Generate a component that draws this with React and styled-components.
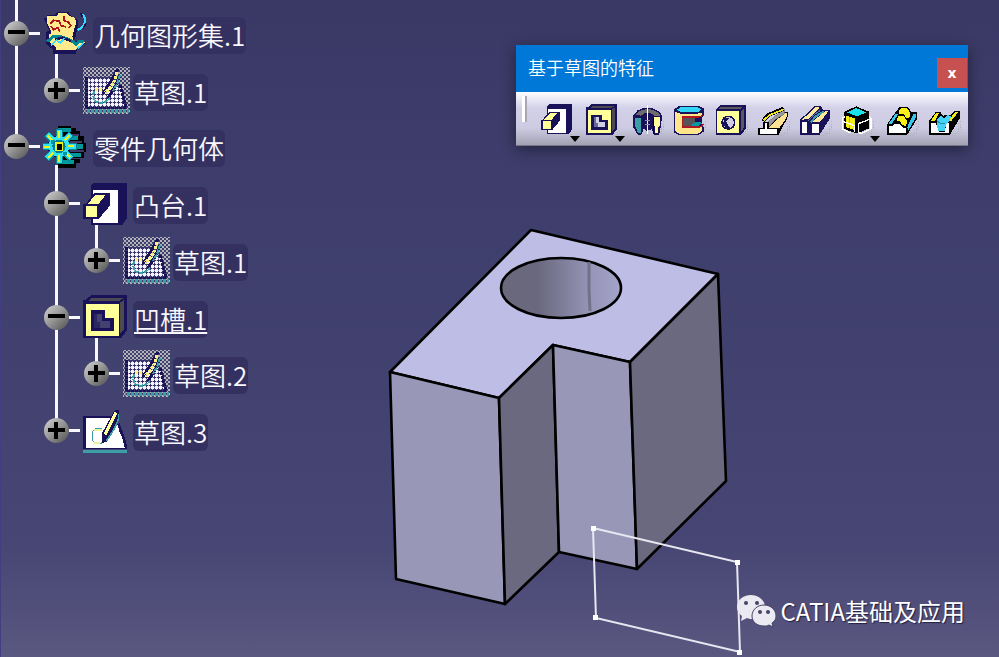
import styled, { createGlobalStyle } from 'styled-components'

const colors = {
    ink: '#1a1258',
    yellow: '#ffff99',
    teal: '#3c9ea6',
    cyan: '#33ddff',
    line: '#f8f7fd',
    label: '#343160',
    title: '#0078d7',
    close: '#c75050'
}

const GlobalStyle = createGlobalStyle`
    * {
        box-sizing: border-box;
    }
    body {
        margin: 0;
        font-family: "Noto Sans CJK SC", "Noto Sans", sans-serif;
    }
    button {
        padding: 0;
        border: none;
        background: none;
        font-family: inherit;
        cursor: pointer;
    }
    svg {
        display: block;
    }
`

const Viewport = styled.main`
    position: relative;
    min-height: 100vh;
    overflow: hidden;
    background: linear-gradient(#3a3966 0%, #40406f 45%, #464573 82%, #5a5780 100%);
    box-shadow: inset 1px 0 0 #413f80;
`

const Scene = styled.svg`
    position: absolute;
    inset: 0;
    width: 100%;
    height: 100%;
`

/* specification tree */

const Tree = styled.nav`
    position: relative;
    width: max-content;
    padding-left: 3px;
`

const Stem = styled.div`
    width: 40px;
    height: 5px;
    background: linear-gradient(${colors.line}, ${colors.line}) 12px 0 / 3px 100% no-repeat;
`

const Rows = styled.ul`
    display: grid;
    grid-template-rows: repeat(8, 1fr);
    height: 454px;
    margin: 0;
    padding: 0;
    list-style: none;
`

const Row = styled.li`
    display: flex;
    align-items: stretch;
`

const Guide = styled.span`
    width: 40px;
`

const GuideLine = styled(Guide)`
    background: linear-gradient(${colors.line}, ${colors.line}) 12px 0 / 3px 100% no-repeat;
`

const Branch = styled.span`
    display: flex;
    align-items: center;
    width: 40px;
    padding-left: 1px;
    background: linear-gradient(${colors.line}, ${colors.line}) 12px 0 / 3px ${props => props.$last ? '50%' : '100%'} no-repeat;

    &::after {
        content: '';
        flex: 1;
        height: 3px;
        margin-right: 3px;
        background: ${colors.line};
    }
`

const Ball = styled.button`
    display: grid;
    place-items: center;
    width: 25px;
    height: 25px;
    border-radius: 50%;
    background: linear-gradient(135deg, #c8c8c8 10%, #9a9a9a 45%, #5c5c5c 90%);
`

const IconCell = styled.span`
    display: flex;
    flex-direction: column;
    justify-content: center;
    width: 50px;
    background: linear-gradient(${colors.line}, ${colors.line}) 12px 100% / 3px ${props => props.$open ? '10px' : '0'} no-repeat;
`

const Label = styled.span`
    align-self: center;
    margin-top: 4px;
    padding: 0 1px 2px;
    border-radius: 6px;
    background: ${colors.label};
    color: ${colors.line};
    font-size: 26px;
    font-weight: 350;
    line-height: 35px;
    text-decoration: ${props => props.$active ? 'underline' : 'none'};
    text-decoration-thickness: 2px;
    text-underline-offset: 2px;
`

/* floating toolbar */

const ToolWindow = styled.section`
    position: absolute;
    top: 45px;
    right: 31px;
    width: 452px;
    box-shadow: 0 3px 14px rgba(0, 0, 0, 0.45);
`

const TitleBar = styled.header`
    display: flex;
    align-items: center;
    justify-content: space-between;
    height: 47px;
    padding: 0 1px 0 12px;
    background: ${colors.title};
`

const Title = styled.h1`
    margin: 0;
    padding-bottom: 3px;
    color: white;
    font-size: 18px;
    font-weight: 350;
    line-height: 24px;
`

const CloseButton = styled.button`
    align-self: flex-end;
    width: 30px;
    height: 30px;
    margin-bottom: 4px;
    background: ${colors.close};
    color: white;
    font-family: "DejaVu Sans", sans-serif;
    font-size: 14px;
    font-weight: bold;
    line-height: 26px;
`

const ToolBar = styled.div`
    display: flex;
    align-items: flex-start;
    gap: 6px;
    height: 54px;
    padding: 4px 0 0 6px;
    border-bottom: 1px solid #777688;
    background: linear-gradient(#fdfdff 0, #d2d1e8 16px, #cccbe2 36px, #a3a2b3 100%);
`

const Grip = styled.span`
    width: 5px;
    height: 26px;
    margin-right: 8px;
    border-left: 3px solid white;
    border-right: 2px solid #a8a7b8;
`

const Tool = styled.button`
    position: relative;
    display: flex;
    flex: none;
    align-items: flex-start;
    width: ${props => props.$menu ? '39px' : '36px'};
    height: 46px;
    padding-top: 8px;
`

const MenuArrow = styled.span`
    position: absolute;
    right: 0;
    bottom: 0;
    border: 5px solid transparent;
    border-top: 6px solid black;
    border-bottom: none;
`

const Watermark = styled.footer`
    position: absolute;
    right: 34px;
    bottom: 28px;
    display: flex;
    align-items: center;
    gap: 5px;
    color: white;
    font-size: 24px;
    line-height: 36px;
    text-shadow: 1px 1px 1px rgba(20, 18, 50, 0.8);
`

/* icons */

function PadIcon({ size }) {
    return (
        <svg width={size} height={size} viewBox="0 0 132 132" shapeRendering="crispEdges">
            <path d="M24 12L34 2H132V108L118 129H24Z" fill={colors.ink} />
            <path d="M29 23H106V123H29Z" fill="white" />
            <path d="M0 66H8L34 34H80V72L48 110H0Z" fill={colors.ink} />
            <path d="M9 71H43V105H9Z" fill={colors.yellow} />
            <path d="M13 66L37 40H67L46 66Z" fill={colors.yellow} />
        </svg>
    )
}

function PocketIcon({ size, hollow }) {
    return (
        <svg width={size} height={size} viewBox="0 0 132 132" shapeRendering="crispEdges">
            <path d="M1 14H8L24 1H132V106L114 130H1Z" fill={colors.ink} />
            <path d="M16 18L27 9H122L108 18ZM124 15V102L112 116V22Z" fill="#4b4a50" />
            <path d="M9 26H107V124H9Z" fill={colors.yellow} />
            <path d="M23 45H66V68H92V109H23Z" fill={colors.ink} />
            <path d="M32 56H56V78H82V99H32Z" fill={hollow} />
            <path d="M32 56H41V82H32ZM32 82H50V99H32Z" fill={colors.ink} opacity="0.55" />
        </svg>
    )
}

function GeometricSetIcon() {
    return (
        <svg width="44" height="44" viewBox="0 0 132 132" shapeRendering="crispEdges" fill="none">
            <path d="M2 22H12V12H36L46 2H76L82 12L104 28V48L98 76L92 92L122 88L128 98L104 110L98 128H30V116L10 100V62L18 58L8 34Z" fill={colors.ink} />
            <path d="M12 16H42L46 6H72L78 14L94 20L100 32L92 60L88 78L96 96L104 90H122L126 96L108 106L98 118H38V108L20 94L18 70L26 66L12 34Z" fill="#ffea8c" />
            <path d="M12 92L32 76L58 78L84 88L100 100L108 92L124 90" stroke="#008a94" strokeWidth="9" />
            <path d="M36 86L58 80L84 90" stroke={colors.ink} strokeWidth="7" />
            <path d="M24 104L40 88L52 96L64 82M104 112L124 94" stroke={colors.cyan} strokeWidth="5" />
            <path d="M22 38L32 28L48 30L54 44L70 48M22 44L32 56L44 50L50 62M62 16V28L76 34L84 44L76 52" stroke="#b3121c" strokeWidth="5" />
            <path d="M118 8L126 22V36L118 48L104 58" stroke={colors.cyan} strokeWidth="6" />
            <path d="M112 6L118 18M130 36L120 52" stroke={colors.ink} strokeWidth="5" />
        </svg>
    )
}

function BodyIcon() {
    const teeth = [0, 45, 90, 135, 180, 225, 270, 315]

    return (
        <svg width="44" height="44" viewBox="0 0 132 132" shapeRendering="crispEdges" fill="none">
            <path d="M46 2H84V10H100V18H112V34H122V54H130V82H122V100H112V114H100V128H44V118H60V14H46Z" fill="black" />
            <path d="M70 28H108V34H70ZM80 48H118V54H80ZM80 76H122V81H80ZM74 98H110V103H74Z" fill="#3e3d6c" />
            <path d="M44 8H84V20H44ZM60 32H104V46H60ZM70 57H120V72H70ZM68 83H114V95H68ZM56 106H94V118H56Z" fill="#009a9e" />
            <circle cx="48" cy="64" r="34" fill={colors.ink} />
            {teeth.map(angle => (
                <path key={angle} d="M39 12H57V42H39Z" fill="#2fe3f2" stroke="#00858f" strokeWidth="3" transform={`rotate(${angle} 48 64)`} />
            ))}
            <circle cx="48" cy="64" r="31" fill="#2fe3f2" />
            {teeth.map(angle => (
                <path key={angle} d="M44 18H50V38H44Z" fill="#eef222" transform={`rotate(${angle} 48 64)`} />
            ))}
            <path d="M24 46H36V58H24ZM60 80H72V90H60Z" fill="#00989c" />
            <circle cx="48" cy="64" r="20" fill="#007f94" />
            <path d="M38 54H58V76H38Z" fill="black" stroke="#e8ee20" strokeWidth="5" />
        </svg>
    )
}

function SketchIcon() {
    return (
        <svg width="44" height="44" viewBox="0 0 132 132" shapeRendering="crispEdges" fill="none">
            <path d="M0 22H92L132 119H0Z" fill={colors.ink} />
            <path d="M10 28H84L104 46L110 70L118 88L126 118H10Z" fill="white" />
            <path d="M106 44L114 66L122 88L130 118" stroke={colors.ink} strokeWidth="8" />
            <path d="M0 127H132" stroke={colors.teal} strokeWidth="8" />
            <path d="M57 58H38L28 68V94L38 104H54L60 98" stroke={colors.teal} strokeWidth="4" />
            <path d="M34 64H56M34 102H50" stroke="#e9f29a" strokeWidth="6" />
            <path d="M96 2H107V24L72 98L56 102V74Z" fill={colors.ink} />
            <path d="M99 10L66 76" stroke={colors.yellow} strokeWidth="10" />
            <path d="M106 14V32L96 54L84 76L70 96" stroke={colors.teal} strokeWidth="5" />
        </svg>
    )
}

// sketches consumed by a feature are shown through a screen of dots
function HiddenSketchIcon() {
    return (
        <svg width="47" height="47" viewBox="0 0 47 47" shapeRendering="crispEdges" fill="none">
            <defs>
                <pattern id="screen" width="4" height="4" patternUnits="userSpaceOnUse">
                    <path d="M1 0h2v1h-2zM0 1h1v2h-1zM3 1h1v2h-1zM1 3h2v1h-2z" fill="#b4b3b8" />
                </pattern>
                <pattern id="paper" width="4" height="4" patternUnits="userSpaceOnUse">
                    <path d="M0 0h3v3h-3z" fill="#f6f5fb" />
                    <path d="M3 1h1v1h-1zM1 3h1v1h-1z" fill="#b9b8d4" />
                </pattern>
                <pattern id="edge" width="4" height="4" patternUnits="userSpaceOnUse">
                    <path d="M0 0h3v4h-3z" fill={colors.teal} />
                </pattern>
            </defs>
            <path d="M0 0H47V47H0Z" fill="url(#screen)" />
            <path d="M2 10H32L38 18L44 42H2Z" fill="#38346a" />
            <path d="M5 11H30L38 20L41 40H5Z" fill="url(#paper)" />
            <path d="M3 10V41H44M37 18L43 40" stroke={colors.ink} strokeWidth="3" strokeDasharray="3 1" />
            <path d="M35 2L28 14L20 27M37 8L33 18L25 31" stroke={colors.ink} strokeWidth="3" />
            <path d="M34 5L32 13L27 21L22 26M12 22H20" stroke="#fdf27d" strokeWidth="3" strokeDasharray="3 1" />
            <path d="M37 8L34 17L30 24M11 24L10 29L12 34L17 36L22 35L27 31" stroke={colors.teal} strokeWidth="2" strokeDasharray="4 1" />
            <path d="M2 42H46V46H2Z" fill="url(#edge)" />
        </svg>
    )
}

function ToolSvg({ children }) {
    return (
        <svg width="36" height="33" viewBox="0 3 108 99" shapeRendering="crispEdges" fill="none">
            <path d="M14 98H84M66 92H92M92 60V92M98 54V84" stroke="#b2b1c2" strokeWidth="4" strokeDasharray="4 4" />
            {children}
        </svg>
    )
}

function ShaftIcon() {
    return (
        <ToolSvg>
            <path d="M5 38L20 22L38 15H64L86 26L93 38L90 70L84 95H68L62 78L49 84L38 78L31 95H20L5 70Z" fill={colors.ink} />
            <path d="M12 36L30 22L44 19H60L82 28L88 38H70L58 30H42L30 38Z" fill="#6c6b6e" />
            <path d="M12 44H29V91H22L12 70Z" fill={colors.teal} />
            <path d="M70 42H88V66L82 72V91H71Z" fill={colors.yellow} />
            <path d="M66 46V92H70V46Z" fill="black" />
            <path d="M49 7V92" stroke="white" strokeWidth="4" />
            <path d="M42 52H56M42 64H56" stroke="#8f8ea8" strokeWidth="3" />
        </ToolSvg>
    )
}

function GrooveIcon() {
    return (
        <ToolSvg>
            <path d="M3 18L20 8H76L92 16V34L88 44V66L92 72V86L76 96H18L3 88Z" fill={colors.ink} />
            <path d="M7 26L22 32H74L88 28V34L84 40H30V72H88V84L74 92H20L7 85Z" fill="#ffe68c" />
            <path d="M9 20L24 10H74L88 20L74 30H24Z" fill="#33d6f5" stroke={colors.ink} strokeWidth="4" />
            <path d="M30 44H66V70H30Z" fill="#55545a" />
            <path d="M50 70L68 56H86V62L72 72Z" fill="#009aa4" />
            <path d="M66 56L86 50V60" stroke={colors.ink} strokeWidth="4" />
            <path d="M92 36L78 42H28V72H80L92 64" stroke="#b01820" strokeWidth="4" />
        </ToolSvg>
    )
}

function HoleIcon() {
    return (
        <ToolSvg>
            <path d="M2 20L16 7H93V76L78 96H2Z" fill={colors.ink} />
            <path d="M10 18L20 11H86L76 18ZM88 16V73L79 85V24Z" fill="#5a595e" />
            <path d="M7 23H73V91H7Z" fill={colors.yellow} />
            <circle cx="40" cy="59" r="19" fill="#cfcee2" stroke={colors.ink} strokeWidth="5" />
            <path d="M28 44H44L34 56L44 74H34L24 66Z" fill={colors.ink} />
        </ToolSvg>
    )
}

function RibIcon() {
    return (
        <ToolSvg>
            <path d="M32 77L40 66L82 28H91V40L64 94V77Z" fill="#ffe391" stroke="black" strokeWidth="4" />
            <path d="M66 76L90 44V48L66 90Z" fill="black" />
            <path d="M34 56L82 18V34L56 48L36 72Z" fill="#99989a" stroke="#6c6b70" strokeWidth="2" />
            <path d="M5 76H20V58H32V76H63V94H5Z" fill="white" stroke="black" strokeWidth="5" />
            <path d="M18 54L34 36L80 17" stroke="black" strokeWidth="12" />
            <path d="M20 52L36 37L80 19" stroke="#f3e61e" strokeWidth="5" />
        </ToolSvg>
    )
}

function SlotIcon() {
    return (
        <ToolSvg>
            <path d="M3 50L48 9H66L72 20H93V46L62 95H3Z" fill={colors.ink} />
            <path d="M9 50L50 13H62L30 48Z" fill="#ffe99c" />
            <path d="M40 56L78 25H88L64 56Z" fill="#ffe99c" />
            <path d="M9 56H24V90H9ZM38 62H60V90H38Z" fill="white" />
            <path d="M36 58L48 42L74 25" stroke={colors.teal} strokeWidth="6" />
            <path d="M28 54L42 38L64 22" stroke="#5a6fb0" strokeWidth="3" />
        </ToolSvg>
    )
}

function SolidCombineIcon() {
    return (
        <ToolSvg>
            <path d="M10 26L46 10L84 26V76L48 92L10 78Z" fill="black" />
            <path d="M18 28L46 15L76 28L48 40Z" fill="#19e3e8" />
            <path d="M14 37L42 47V82L14 72Z" fill="#f5ee14" />
            <path d="M26 42V76" stroke="#c9be00" strokeWidth="3" />
            <path d="M4 46L12 40M4 46V78L30 90M4 54L40 68V88M84 40L90 46V78L62 92L52 88V62L88 48" stroke="white" strokeWidth="4" />
        </ToolSvg>
    )
}

function MultiSectionIcon() {
    return (
        <ToolSvg>
            <path d="M3 64L28 28L42 11H66L76 28H94V46L64 95H3Z" fill="black" />
            <path d="M8 70H18L26 62H40L50 74H60V91H8Z" fill="white" />
            <path d="M8 62L28 34H36L18 62ZM64 72L82 34H90V44L66 84Z" fill="#35c6ee" />
            <path d="M38 26L46 15H62L72 28V42L62 46L54 34H40Z" fill="#f7ef17" />
            <path d="M30 52L38 39H52L64 54L60 70L50 66L42 56Z" fill="#f7ef17" />
        </ToolSvg>
    )
}

function RemovedSectionIcon() {
    return (
        <ToolSvg>
            <path d="M3 54L24 26H36L44 38L66 36L78 24H95V46L66 95H3Z" fill="black" />
            <path d="M8 60H24L32 86H50L56 60H64V91H8Z" fill="white" />
            <path d="M8 54L24 30H34L20 54ZM62 54L80 28H90L70 54Z" fill="#f4ea1b" />
            <path d="M26 50L38 38L48 46L60 36L70 40L64 56L54 66L50 84H32L26 70Z" fill="#45d2f7" />
            <path d="M28 54L38 62L52 60" stroke="#1e8fb4" strokeWidth="3" />
        </ToolSvg>
    )
}

function WechatIcon() {
    return (
        <svg width="39" height="34" viewBox="0 0 39 34">
            <path d="M14 1C6 1 0 6 0 13c0 4 2 7 5 9l-1 5 6-3c2 1 4 1 6 1 7 0 12-5 12-12S21 1 14 1Z" fill="#ebeaf2" />
            <circle cx="9" cy="9" r="2" fill="#454366" />
            <circle cx="20" cy="9" r="2" fill="#454366" />
            <path d="M27 11c-7 0-12 5-12 11s5 10 12 10c2 0 3 0 5-1l4 2-1-4c3-2 4-4 4-7 0-6-5-11-12-11Z" fill="#ebeaf2" stroke="#454366" />
            <circle cx="23" cy="18" r="2" fill="#454366" />
            <circle cx="31" cy="18" r="2" fill="#454366" />
        </svg>
    )
}

const treeNodes = [
    { id: 1, name: '几何图形集.1', depth: 0, icon: <GeometricSetIcon />, open: true },
    { id: 2, name: '草图.1', depth: 1, icon: <HiddenSketchIcon />, last: true, lines: [true] },
    { id: 3, name: '零件几何体', depth: 0, icon: <BodyIcon />, open: true, last: true },
    { id: 4, name: '凸台.1', depth: 1, icon: <PadIcon size={44} />, open: true },
    { id: 5, name: '草图.1', depth: 2, icon: <HiddenSketchIcon />, last: true, lines: [false, true] },
    { id: 6, name: '凹槽.1', depth: 1, icon: <PocketIcon size={44} hollow="#43416f" />, open: true, active: true },
    { id: 7, name: '草图.2', depth: 2, icon: <HiddenSketchIcon />, last: true, lines: [false, true] },
    { id: 8, name: '草图.3', depth: 1, icon: <SketchIcon />, last: true }
]

const tools = [
    { name: '凸台', icon: <PadIcon size={31} />, menu: true },
    { name: '凹槽', icon: <PocketIcon size={31} hollow="#cfcee2" />, menu: true },
    { name: '旋转体', icon: <ShaftIcon /> },
    { name: '旋转槽', icon: <GrooveIcon /> },
    { name: '孔', icon: <HoleIcon /> },
    { name: '肋', icon: <RibIcon /> },
    { name: '开槽', icon: <SlotIcon /> },
    { name: '实体混合', icon: <SolidCombineIcon />, menu: true },
    { name: '多截面实体', icon: <MultiSectionIcon /> },
    { name: '已移除的多截面实体', icon: <RemovedSectionIcon /> }
]

function TreeRow({ node }) {
    const indents = Array.from({ length: node.depth }, (_, i) => node.lines?.[i] ?? false)

    return (
        <Row>
            {indents.map((line, i) => line ? <GuideLine key={i} /> : <Guide key={i} />)}
            <Branch $last={node.last}>
                <Ball type="button" aria-label={node.name} aria-expanded={!!node.open}>
                    <svg width="17" height="17" viewBox="0 0 17 17" shapeRendering="crispEdges">
                        <path d={node.open ? 'M0 5H17V9H0Z' : 'M0 6H6V0H10V6H17V10H10V17H6V10H0Z'} fill="black" />
                    </svg>
                </Ball>
            </Branch>
            <IconCell $open={node.open}>{node.icon}</IconCell>
            <Label $active={node.active}>{node.name}</Label>
        </Row>
    )
}

function Part() {
    return (
        <Scene viewBox="0 0 999 657" aria-hidden="true">
            <defs>
                <linearGradient id="bore">
                    <stop offset="0.3" stopColor="#69687d" />
                    <stop offset="0.75" stopColor="#9796b8" />
                    <stop offset="1" stopColor="#a4a3ca" />
                </linearGradient>
            </defs>
            <g stroke="black" strokeWidth="2.6" strokeLinejoin="round">
                <path d="M531 230L718 274L630 362L553 345L499 398L390 372Z" fill="#bebde6" />
                <path d="M390 372L499 398L505 604L396 579Z" fill="#9897b7" />
                <path d="M499 398L553 345L559 552L505 604Z" fill="#6a697f" />
                <path d="M553 345L630 362L637 569L559 552Z" fill="#9897b7" />
                <path d="M630 362L718 274L726 481L637 569Z" fill="#6a697f" />
                <ellipse cx="561" cy="288" rx="60" ry="30" fill="url(#bore)" />
            </g>
            <path d="M589 262V290L590 311" stroke="#72718a" strokeWidth="3" fill="none" />
            <path d="M593 528L737 562L740 652L596 618Z" stroke="#e8e7f0" strokeWidth="2" fill="none" />
            <path d="M591 526h5v5h-5zM735 560h5v5h-5zM737 650h5v5h-5zM593 615h5v5h-5z" fill="white" />
        </Scene>
    )
}

function App() {
    return (
        <Viewport>
            <GlobalStyle />
            <Part />

            <Tree>
                <Stem />
                <Rows>
                    {treeNodes.map(node => <TreeRow key={node.id} node={node} />)}
                </Rows>
            </Tree>

            <ToolWindow>
                <TitleBar>
                    <Title>基于草图的特征</Title>
                    <CloseButton type="button">x</CloseButton>
                </TitleBar>
                <ToolBar>
                    <Grip />
                    {tools.map(tool => (
                        <Tool key={tool.name} type="button" aria-label={tool.name} $menu={tool.menu}>
                            {tool.icon}
                            {tool.menu && <MenuArrow />}
                        </Tool>
                    ))}
                </ToolBar>
            </ToolWindow>

            <Watermark>
                <WechatIcon />
                CATIA基础及应用
            </Watermark>
        </Viewport>
    )
}

export default App
